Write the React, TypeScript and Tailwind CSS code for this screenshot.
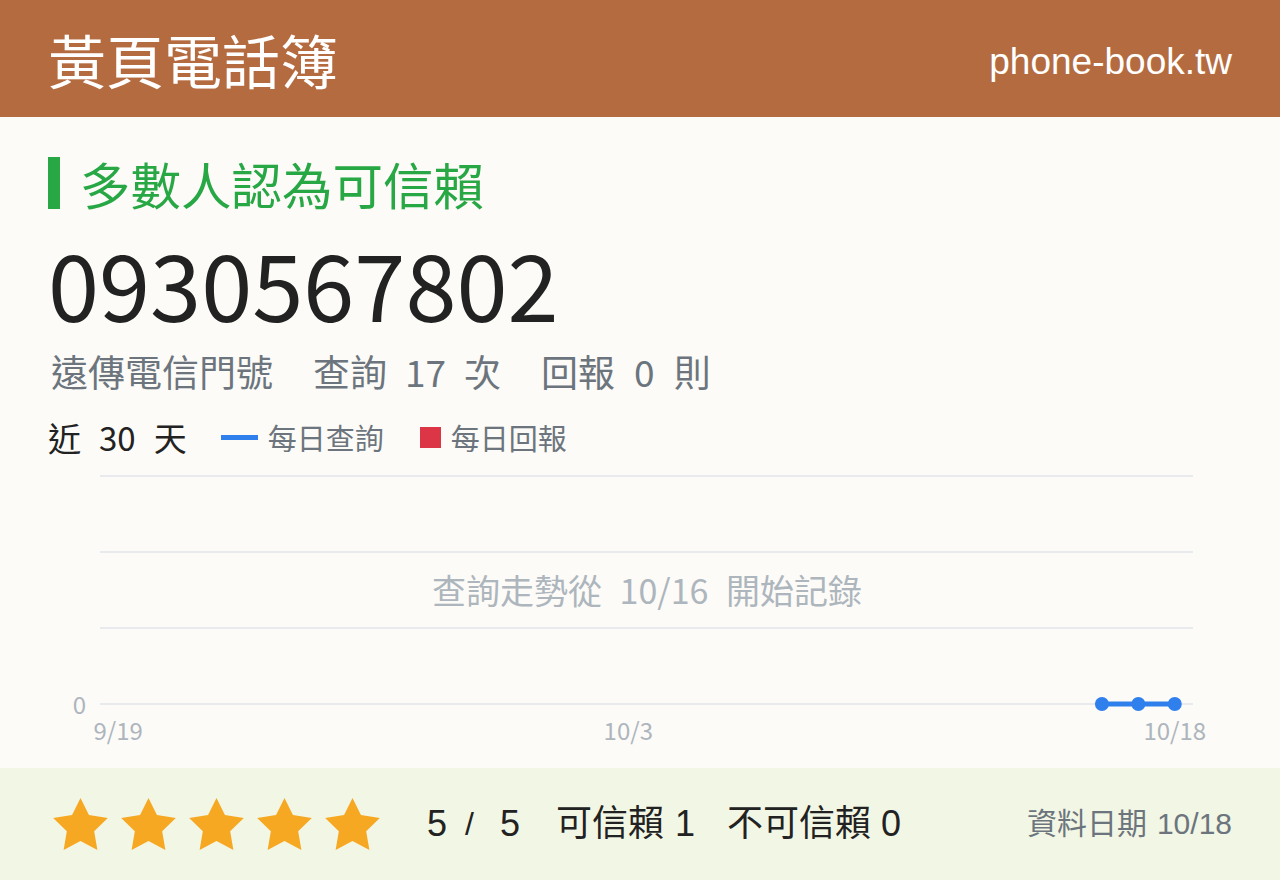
import React from 'react';

const CJK = '"Noto Sans CJK TC", "Noto Sans", sans-serif';
const ARIAL_CJK = '"Liberation Sans", "Noto Sans CJK TC", sans-serif';

// 30 day window, one slot per day, chart.js style offset grid
const CHART_LEFT = 100;
const CHART_RIGHT = 1193;
const DAYS = 30;
const slot = (CHART_RIGHT - CHART_LEFT) / DAYS;
const dayX = (i: number) => CHART_LEFT + slot * (i + 0.5);

// daily query counts, recording started on 10/16 (day index 27)
const queries: Array<{ day: number; value: number }> = [
  { day: 27, value: 0 },
  { day: 28, value: 0 },
  { day: 29, value: 0 },
];

const Star: React.FC = () => (
  <svg width="55" height="52" viewBox="2 2 20 19.02">
    <polygon
      fill="#f6a823"
      points="12 2 15.09 8.26 22 9.27 17 14.14 18.18 21.02 12 17.77 5.82 21.02 7 14.14 2 9.27 8.91 8.26"
    />
  </svg>
);

const TrendChart: React.FC = () => {
  const gridY = [10, 86, 162, 238];
  const base = 238;
  const pts = queries.map((q) => `${dayX(q.day)},${base - q.value * 76}`).join(' ');

  return (
    <svg width="1280" height="302" viewBox="0 0 1280 302" className="block">
      {gridY.map((y) => (
        <line key={y} x1={CHART_LEFT} x2={CHART_RIGHT} y1={y} y2={y} stroke="#e8eaed" strokeWidth="2" />
      ))}
      <text
        x="647"
        y="123"
        textAnchor="middle"
        dominantBaseline="central"
        fill="#adb5bd"
        fontSize="34"
        style={{ fontFamily: CJK, wordSpacing: '10px' }}
      >
        查詢走勢從 10/16 開始記錄
      </text>
      <text x="86" y={base - 1} textAnchor="end" dominantBaseline="central" fill="#adb5bd" fontSize="24" style={{ fontFamily: CJK }}>
        0
      </text>
      {[
        { day: 0, label: '9/19' },
        { day: 14, label: '10/3' },
        { day: 29, label: '10/18' },
      ].map((t) => (
        <text
          key={t.label}
          x={dayX(t.day)}
          y="263"
          textAnchor="middle"
          dominantBaseline="central"
          fill="#adb5bd"
          fontSize="24"
          style={{ fontFamily: CJK }}
        >
          {t.label}
        </text>
      ))}
      <polyline points={pts} fill="none" stroke="#2f80ed" strokeWidth="5" />
      {queries.map((q) => (
        <circle key={q.day} cx={dayX(q.day)} cy={base - q.value * 76} r="7" fill="#2f80ed" />
      ))}
    </svg>
  );
};

export default function App() {
  return (
    <div className="flex h-[880px] w-[1280px] flex-col bg-[#fcfbf7]" style={{ fontFamily: CJK }}>
      {/* Top bar */}
      <header className="flex h-[117px] shrink-0 items-center justify-between bg-[#b56b40] px-12 text-white">
        <h1 className="text-[58px] leading-none font-normal">黃頁電話簿</h1>
        <span className="pt-[6px] text-[37px] leading-none" style={{ fontFamily: ARIAL_CJK }}>
          phone-book.tw
        </span>
      </header>

      <main className="flex flex-1 flex-col">
        <div className="px-12">
          <div className="mt-[40px] flex items-center gap-[20px]">
            <span className="h-[52px] w-[12px] bg-[#28a745]" />
            <h2 className="text-[50.5px] leading-none font-normal text-[#28a745]">多數人認為可信賴</h2>
          </div>

          <div className="mt-[27px] text-[92px] leading-none text-[#222222]">0930567802</div>

          <div className="mt-[25px] flex items-center gap-[40px] pl-[3px] text-[37px] leading-none text-[#6c757d]">
            <span>遠傳電信門號</span>
            <span className="flex gap-[18px]">
              <span>查詢</span>
              <span>17</span>
              <span>次</span>
            </span>
            <span className="flex gap-[19px]">
              <span>回報</span>
              <span>0</span>
              <span>則</span>
            </span>
          </div>

          <div className="mt-[31px] flex items-center leading-none">
            <span className="flex gap-[18px] text-[33px] text-[#222222]">
              <span>近</span>
              <span>30</span>
              <span>天</span>
            </span>
            <span className="ml-[34px] flex items-center gap-[10px] text-[29px] text-[#6c757d]">
              <span className="h-[5px] w-[37px] bg-[#2f80ed]" />
              每日查詢
            </span>
            <span className="ml-[36px] flex items-center gap-[10px] text-[29px] text-[#6c757d]">
              <span className="h-[21px] w-[21px] bg-[#dc3545]" />
              每日回報
            </span>
          </div>
        </div>

        <div className="mt-auto">
          <TrendChart />
        </div>
      </main>

      {/* Rating summary */}
      <footer
        className="flex h-[112px] shrink-0 items-center bg-[#f2f6e4] pr-12 pl-[53px] text-[36px] leading-none text-[#222222]"
        style={{ fontFamily: ARIAL_CJK }}
      >
        <div className="flex gap-[13px]">
          {[0, 1, 2, 3, 4].map((i) => (
            <Star key={i} />
          ))}
        </div>
        <div className="ml-[47px] flex items-center">
          <span>5</span>
          <span className="ml-[18px] text-[32px]">/</span>
          <span className="ml-[26px]">5</span>
        </div>
        <div className="ml-[36px] flex gap-[11px]">
          <span>可信賴</span>
          <span>1</span>
        </div>
        <div className="ml-[32px] flex gap-[10px]">
          <span>不可信賴</span>
          <span>0</span>
        </div>
        <div className="ml-auto flex gap-[10px] text-[30px] text-[#6c757d]">
          <span>資料日期</span>
          <span>10/18</span>
        </div>
      </footer>
    </div>
  );
}
